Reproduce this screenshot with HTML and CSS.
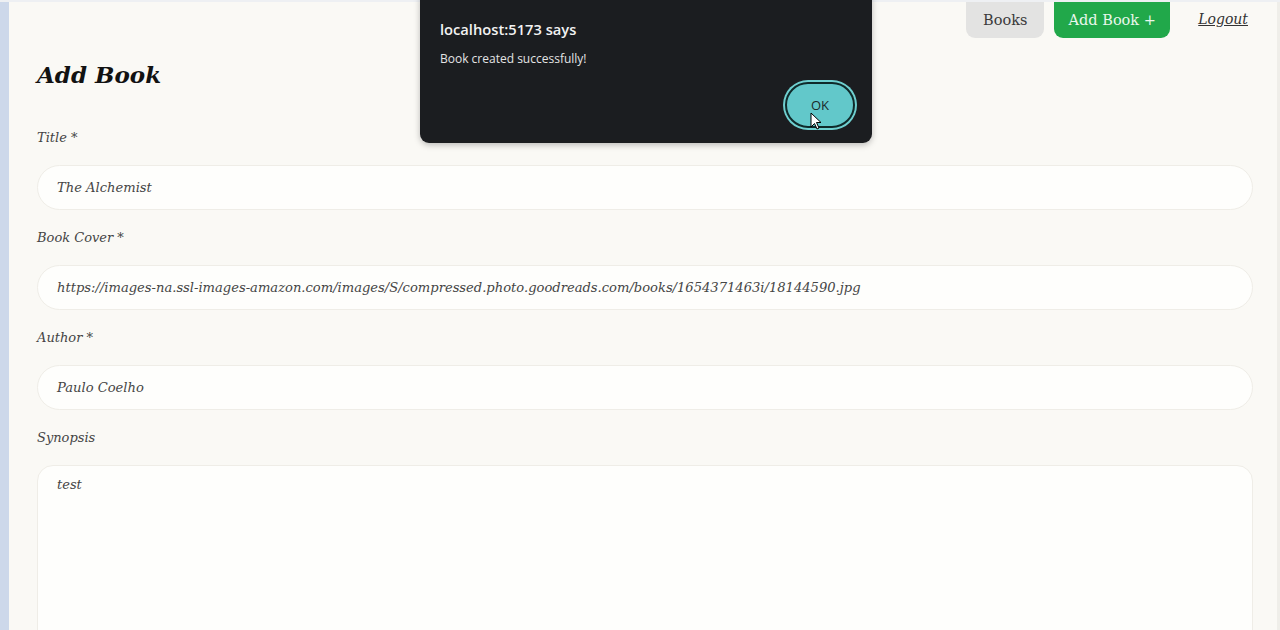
FILE: index.html
```html
<!DOCTYPE html>
<html lang="en">
<head>
<meta charset="utf-8">
<title>Add Book</title>
<link rel="stylesheet" href="styles.css">
</head>
<body>
<div class="shell">
  <aside class="side-strip"></aside>
  <main class="page">
    <header class="topbar">
      <nav class="nav">
        <a class="nav-btn nav-books">Books</a>
        <a class="nav-btn nav-add">Add Book +</a>
        <a class="nav-link">Logout</a>
      </nav>
    </header>
    <h1 class="heading">Add Book</h1>
    <form class="form">
      <div class="field">
        <label class="label">Title *</label>
        <div class="input">The Alchemist</div>
      </div>
      <div class="field">
        <label class="label">Book Cover *</label>
        <div class="input">https://images-na.ssl-images-amazon.com/images/S/compressed.photo.goodreads.com/books/1654371463i/18144590.jpg</div>
      </div>
      <div class="field">
        <label class="label">Author *</label>
        <div class="input">Paulo Coelho</div>
      </div>
      <div class="field">
        <label class="label">Synopsis</label>
        <div class="textarea">test</div>
      </div>
    </form>
  </main>
</div>

<div class="dialog">
  <div class="dialog-title">localhost:5173 says</div>
  <div class="dialog-msg">Book created successfully!</div>
  <div class="dialog-actions">
    <button class="dialog-ok">OK</button>
  </div>
  <svg class="cursor" width="12" height="18" viewBox="0 0 12 18">
    <path d="M1 1 L1 15 L4.5 11.5 L7 17 L9 16 L6.5 10.5 L11 10.5 Z" fill="#fff" stroke="#000" stroke-width="1"/>
  </svg>
</div>
</body>
</html>
```

FILE: styles.css
```css
* { box-sizing: border-box; }
html, body { margin: 0; padding: 0; height: 100%; overflow: hidden; }
body {
  background: #faf9f5;
  font-family: "DejaVu Serif", "Liberation Serif", serif;
  color: #2b2b2b;
}
.shell {
  display: flex;
  height: 630px;
  overflow: hidden;
  border-top: 2px solid #eef0f3;
}
.side-strip {
  width: 9px;
  flex: none;
  background: #cdd8ea;
}
.page {
  flex: 1;
  padding: 0 24px 0 28px;
  border-right: 3px solid #efeee9;
}
.topbar {
  display: flex;
  justify-content: flex-end;
  margin-top: -12px;
}
.nav {
  display: flex;
  align-items: center;
  gap: 10px;
}
.nav-btn {
  display: flex;
  align-items: center;
  justify-content: center;
  height: 48px;
  padding: 11px 0 0;
  border-radius: 9px;
  font-size: 14.5px;
}
.nav-books {
  width: 78px;
  background: #e3e3e2;
  color: #3a3a3a;
}
.nav-add {
  width: 116px;
  background: #21a84a;
  color: #eaf7ec;
}
.nav-link {
  margin-left: 18px;
  margin-right: 5px;
  padding-top: 10px;
  font-size: 14px;
  font-style: italic;
  text-decoration: underline;
  color: #333;
}
.heading {
  margin: 21px 0 37px;
  font-size: 23px;
  font-weight: bold;
  font-style: italic;
  color: #121212;
  line-height: 32px;
}
.form {
  display: flex;
  flex-direction: column;
  gap: 18px;
}
.field {
  display: flex;
  flex-direction: column;
  gap: 18px;
}
.label {
  font-size: 13px;
  font-style: italic;
  color: #444;
  line-height: 19px;
}
.input {
  height: 45px;
  display: flex;
  align-items: center;
  padding: 0 19px;
  background: #fefefc;
  border: 1px solid #efede7;
  border-radius: 23px;
  font-size: 13.1px;
  font-style: italic;
  color: #454545;
  white-space: nowrap;
  overflow: hidden;
}
.textarea {
  height: 200px;
  padding: 11px 19px;
  background: #fefefc;
  border: 1px solid #efede7;
  border-radius: 16px;
  font-size: 13px;
  font-style: italic;
  color: #454545;
}
.dialog {
  position: absolute;
  left: 420px;
  top: -10px;
  width: 452px;
  height: 153px;
  background: #1b1d20;
  border-radius: 9px;
  box-shadow: 0 2px 6px rgba(0,0,0,0.25);
  padding: 29px 20px 0;
  font-family: "Open Sans", "Noto Sans", sans-serif;
}
.dialog-title {
  color: #f2f2f2;
  font-size: 14.7px;
  font-weight: 600;
  line-height: 20px;
}
.dialog-msg {
  margin-top: 12px;
  color: #e4e4e4;
  font-size: 12px;
  line-height: 16px;
}
.dialog-actions {
  display: flex;
  justify-content: flex-end;
  margin-top: 15px;
}
.dialog-ok {
  width: 70px;
  height: 46px;
  margin-right: -3px;
  border-radius: 23px;
  background: #62c8ca;
  border: 2px solid #0f2a2a;
  box-shadow: 0 0 0 2px #6fd0d0;
  color: #1a2a2a;
  font-family: "Open Sans", "Noto Sans", sans-serif;
  font-size: 13px;
}
.cursor {
  position: absolute;
  left: 390px;
  top: 122px;
}
```
